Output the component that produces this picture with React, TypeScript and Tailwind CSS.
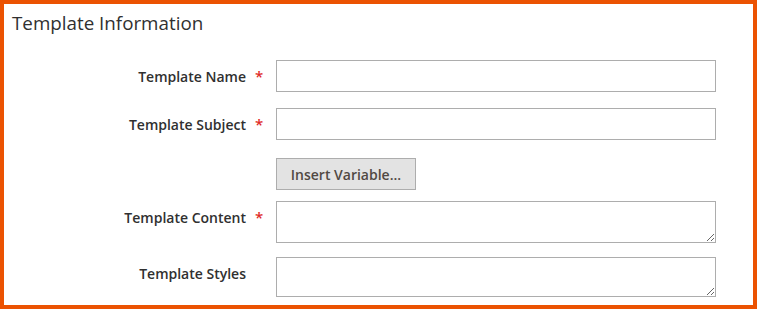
import React from 'react';

// form field row: right-aligned label, required marker slot, control
function Field({
  label,
  required,
  children,
  className,
}: {
  label?: string;
  required?: boolean;
  children: React.ReactNode;
  className?: string;
}) {
  return (
    <div className={`flex items-start ${className ?? ''}`}>
      <div className="flex h-8 w-[242px] items-center justify-end text-[14px] font-semibold text-[#303030]">
        {label}
      </div>
      <div className="flex h-8 w-[30px] items-center pl-[9px] text-[15px] font-semibold text-[#e02b27]">
        {required ? '*' : ''}
      </div>
      {children}
    </div>
  );
}

export default function App() {
  return (
    <div
      className="h-[309px] w-[757px] overflow-hidden border-4 border-[#eb5202] bg-white"
      style={{ fontFamily: '"Open Sans", "Noto Sans", Arial, sans-serif' }}
    >
      {/* legend */}
      <h2 className="pl-[8px] pt-[7px] text-[18.8px] leading-[24px] font-medium text-[#303030]">
        Template Information
      </h2>

      <Field label="Template Name" required className="mt-[25px]">
        <input type="text" className="h-8 w-[440px] border border-[#adadad] bg-white px-2 text-sm outline-none" />
      </Field>

      <Field label="Template Subject" required className="mt-[16px]">
        <input type="text" className="h-8 w-[440px] border border-[#adadad] bg-white px-2 text-sm outline-none" />
      </Field>

      <Field className="mt-[18px]">
        <button
          type="button"
          className="h-8 w-[140px] border border-[#adadad] bg-[#e3e3e3] text-[14px] font-semibold text-[#514943]"
        >
          Insert Variable...
        </button>
      </Field>

      <Field label="Template Content" required className="mt-[11px]">
        <textarea className="block h-[42px] w-[440px] border border-[#adadad] bg-white px-2 text-sm outline-none" />
      </Field>

      <Field label="Template Styles" className="mt-[14px]">
        <textarea className="block h-[40px] w-[440px] border border-[#adadad] bg-white px-2 text-sm outline-none" />
      </Field>
    </div>
  );
}
